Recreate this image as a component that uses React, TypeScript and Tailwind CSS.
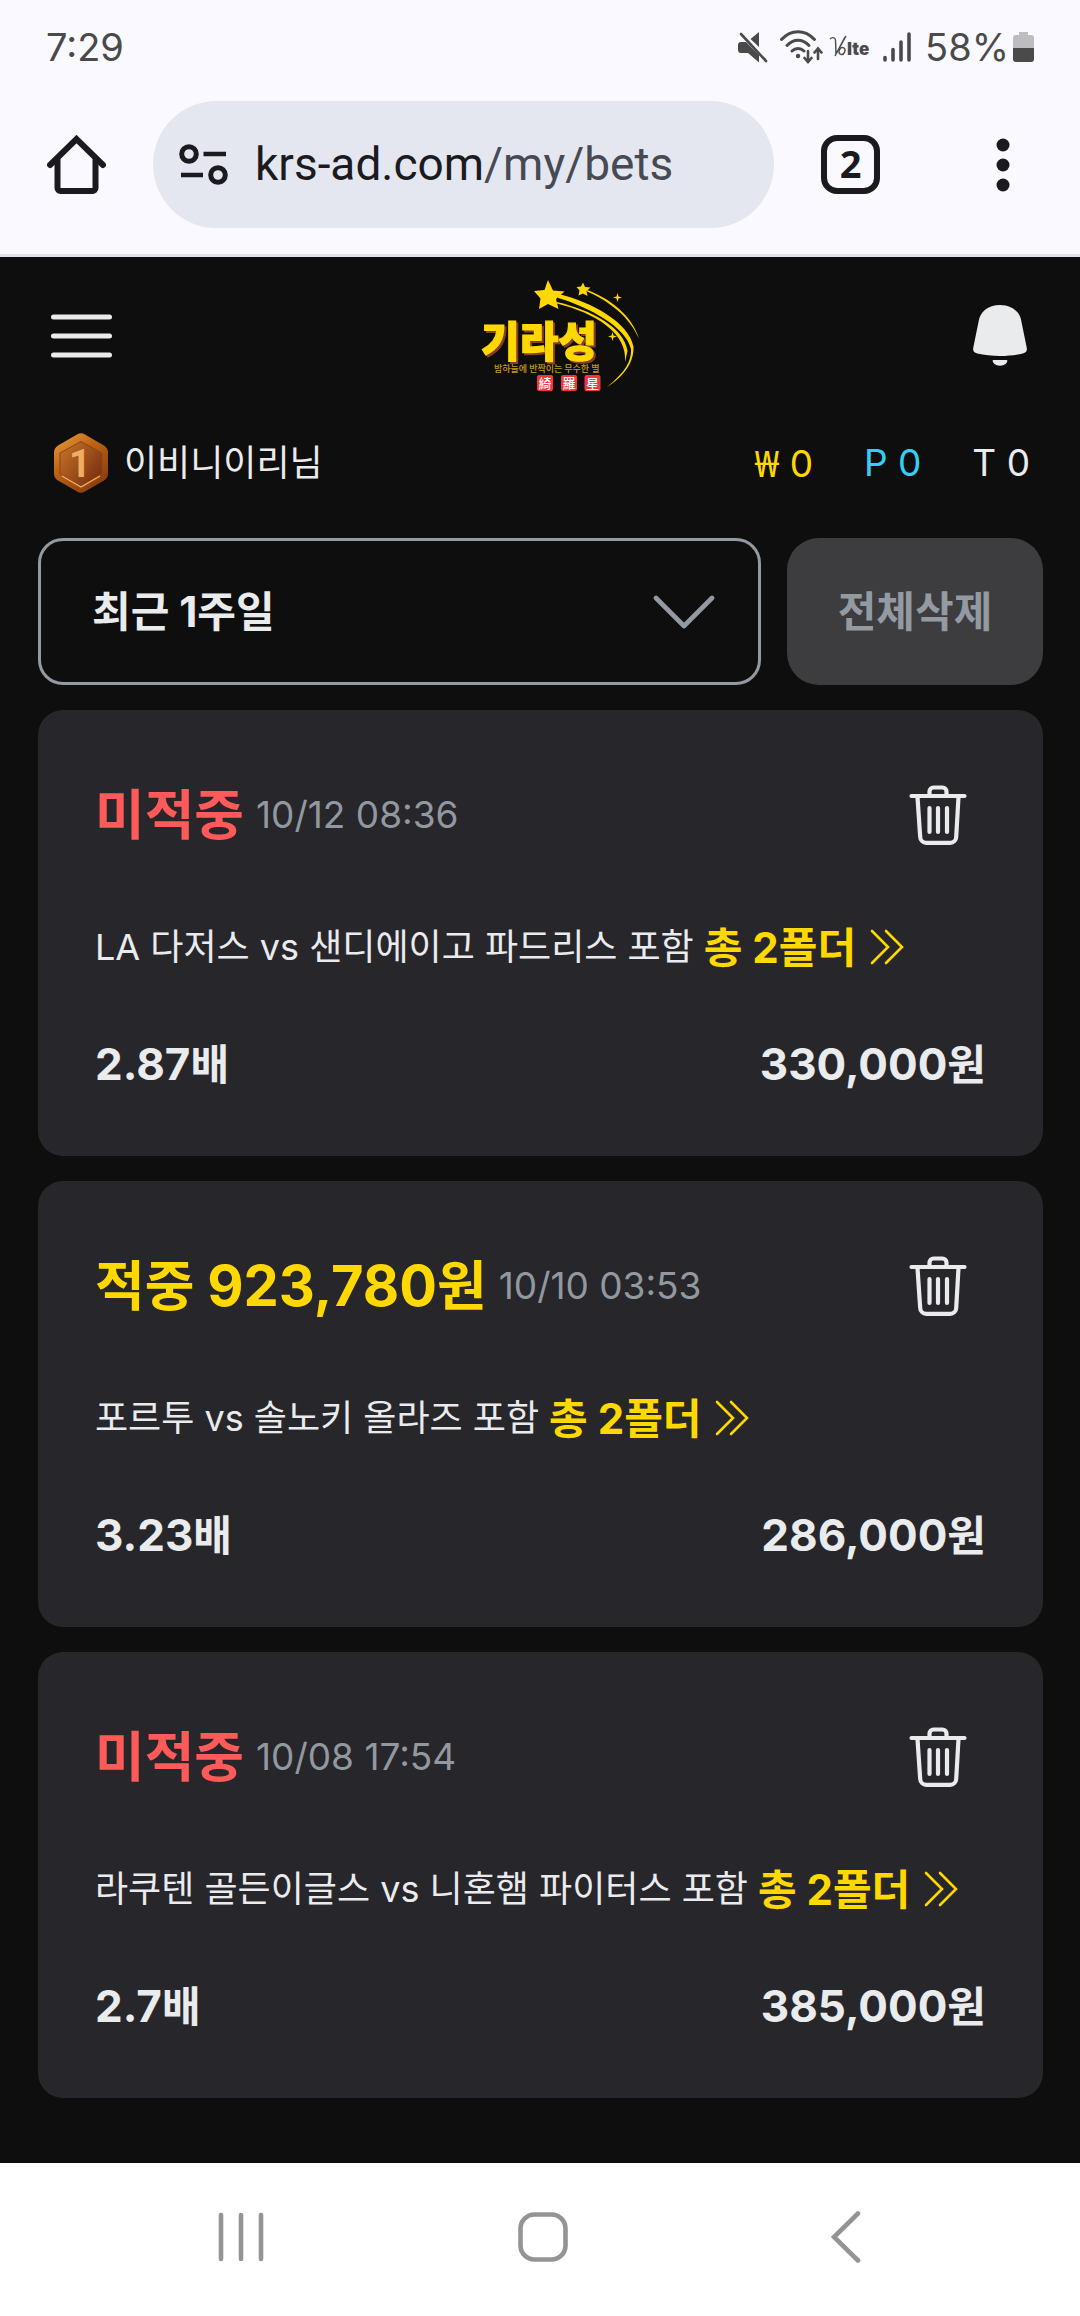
import { useState } from "react";

type Bet = {
  id: number;
  won: boolean;
  prize?: string;
  date: string;
  match: string;
  folders: number;
  odds: string;
  amount: string;
};

const BETS: Bet[] = [
  {
    id: 1,
    won: false,
    date: "10/12 08:36",
    match: "LA 다저스 vs 샌디에이고 파드리스 포함",
    folders: 2,
    odds: "2.87",
    amount: "330,000",
  },
  {
    id: 2,
    won: true,
    prize: "923,780",
    date: "10/10 03:53",
    match: "포르투 vs 솔노키 올라즈 포함",
    folders: 2,
    odds: "3.23",
    amount: "286,000",
  },
  {
    id: 3,
    won: false,
    date: "10/08 17:54",
    match: "라쿠텐 골든이글스 vs 니혼햄 파이터스 포함",
    folders: 2,
    odds: "2.7",
    amount: "385,000",
  },
];

function StatusBar() {
  return (
    <div className="flex h-[94px] items-center justify-between px-[46px] text-[38px] text-[#4a4a4a]">
      <span>7:29</span>
      <div className="flex items-center">
        <svg width="30" height="32" viewBox="0 0 30 32" fill="#4a4a4a" className="mr-3">
          <path d="M21 1v15L12.500 8z" />
          <path d="M3 11h5l13 13v7.500L10 22H3a3 3 0 0 1-3-3v-5a3 3 0 0 1 3-3z" />
          <path d="M3 3l25 27" stroke="#4a4a4a" strokeWidth="2.600" strokeLinecap="round" />
        </svg>
        <svg width="43" height="34" viewBox="0 0 43 34" fill="none" stroke="#4a4a4a" strokeWidth="3" strokeLinecap="round" className="mr-1.5">
          <path d="M1.500 9.500C11-1 25-1 34.500 9.500" />
          <path d="M7 15.500c6.500-7 15.500-7 22 0" />
          <path d="M12 21c3.500-3.500 8.500-3.500 12 0" />
          <circle cx="18" cy="26" r="2.200" fill="#4a4a4a" stroke="none" />
          <path d="M28 21v10M24.500 28l3.500 4 3.500-4M38 29V19M34.500 22.500l3.500-4 3.500 4" strokeWidth="2.600" />
        </svg>
        <svg width="44" height="26" viewBox="0 0 44 26" fill="#4a4a4a" className="mr-2.5">
          <path d="M1 5c2-2 5-2 5.500 1L7 20 16 3M17 2L6 22" fill="none" stroke="#4a4a4a" strokeWidth="1.400" />
          <ellipse cx="13" cy="17" rx="2.800" ry="3.600" transform="rotate(20 13 17)" fill="none" stroke="#4a4a4a" strokeWidth="1.400" />
          <text x="18" y="21" fontFamily="Inter, sans-serif" fontSize="17" fontWeight="900">lte</text>
        </svg>
        <svg width="28" height="30" viewBox="0 0 28 30" stroke="#4a4a4a" strokeWidth="3.600" strokeLinecap="round" className="mr-3.5">
          <path d="M2 25.500v2.500M10 17.500V28M18 10v18M26 2v26" />
        </svg>
        <span className="mr-1">58%</span>
        <svg width="21" height="30" viewBox="0 0 21 30">
          <path d="M6 0h9v3h3a3 3 0 0 1 3 3v10H0V6a3 3 0 0 1 3-3h3z" fill="#bdbdbf" />
          <path d="M0 16h21v11a3 3 0 0 1-3 3H3a3 3 0 0 1-3-3z" fill="#4a4a4a" />
        </svg>
      </div>
    </div>
  );
}

function BrowserBar() {
  return (
    <div className="flex items-center border-b-[3px] border-[#e2e2ea] pt-[7px] pr-[70px] pb-[26px] pl-[47px]">
      <button aria-label="Home">
        <svg width="59" height="59" viewBox="0 0 59 59" fill="none" stroke="#1b1b1f" strokeWidth="6" strokeLinecap="round" strokeLinejoin="round">
          <path d="M3 30L29.500 4 56 30" strokeLinejoin="miter" />
          <path d="M10.500 25v28a3 3 0 0 0 3 3h32a3 3 0 0 0 3-3V25" />
        </svg>
      </button>
      <button className="mx-[47px] flex h-[127px] min-w-0 flex-1 items-center rounded-full bg-[#e4e7f0] pl-[26px] font-['Roboto',sans-serif] text-[46px] text-[#1b1b1f]">
        <svg width="50" height="42" viewBox="0 0 50 42" fill="none" stroke="#1b1b1f" className="mr-[26px] shrink-0">
          <circle cx="10" cy="10" r="7.300" strokeWidth="5" />
          <circle cx="39" cy="31" r="7.300" strokeWidth="5" />
          <path d="M24.500 10H47M2 31h22" strokeWidth="4.400" />
        </svg>
        <span>krs-ad.com</span>
        <span className="text-[#474a53]">/my/bets</span>
      </button>
      <button className="flex size-[59px] items-center justify-center rounded-2xl border-6 border-[#1b1b1f] pb-1 font-['Open_Sans',sans-serif] text-[38px] leading-none font-bold text-[#1b1b1f]">
        2
      </button>
      <button aria-label="Menu" className="ml-[116px]">
        <svg width="14" height="54" viewBox="0 0 14 54" fill="#1b1b1f">
          <circle cx="7" cy="7" r="6.500" />
          <circle cx="7" cy="27" r="6.500" />
          <circle cx="7" cy="47" r="6.500" />
        </svg>
      </button>
    </div>
  );
}

function Logo() {
  return (
    <svg width="204" height="118" viewBox="-20 12 204 118">
      <g fill="#ffd800">
        <path d="M87 15l5 10.500 11.500 1-8.500 7.500 2.500 10-10.500-5-9 5 1.500-10.500L73 26l10.500-1z" />
        <path d="M122 17.500l2 4.500 5.500.500-4 3.500 1 5-4.500-2.500-4.500 2 1-5-3-3.500 4.500-.500z" />
        <path d="M98 29C130 37 168 57 172.500 82 173 100 160 113 145 123 158 112 171 100 170 84 165 62 128 42 97 33z" />
        <path d="M126 25C148 33 171 50 178 74 169 52 148 36 126 26.500z" />
        <path d="M96 37C130 45 163 62 166.500 86L164 97C167 68 134 48 96 38.500z" />
        <path d="M156.500 28l1 3.500 3.500 1-3.500 1-1 3.500-1-3.500-3.500-1 3.500-1zM151.500 67l1 3.500 3.500 1-3.500 1-1 3.500-1-3.500-3.500-1 3.500-1z" />
      </g>
      <text
        x="20"
        y="92"
        fontFamily="'Noto Sans CJK KR', sans-serif"
        fontWeight="900"
        fontSize="42"
        fill="#ffd800"
        stroke="#ffd800"
        strokeWidth="1.200"
        className="drop-shadow-[2px_2px_0_#8c3a2a]"
      >
        기라성
      </text>
      <text x="33" y="107" fontFamily="'Noto Sans CJK KR', sans-serif" fontWeight="500" fontSize="9" fill="#c29a1c">
        밤하늘에 반짝이는 무수한 별
      </text>
      <g fill="#f7333a">
        <rect x="76" y="110" width="16" height="16" rx="2" />
        <rect x="100" y="110" width="16" height="16" rx="2" />
        <rect x="123.500" y="110" width="16" height="16" rx="2" />
      </g>
      <g fontFamily="'Noto Sans CJK TC', sans-serif" fontWeight="500" fontSize="13" fill="#fff">
        <text x="77.500" y="123">綺</text>
        <text x="101.500" y="123">羅</text>
        <text x="125" y="123">星</text>
      </g>
    </svg>
  );
}

function SiteHeader() {
  return (
    <header className="flex h-[157px] items-center justify-between pr-[53px] pl-[51px]">
      <button aria-label="메뉴">
        <svg width="61" height="44" viewBox="0 0 61 44" stroke="#eaebed" strokeWidth="5" strokeLinecap="round">
          <path d="M2.500 3h56M2.500 22h56M2.500 41h56" />
        </svg>
      </button>
      <Logo />
      <button aria-label="알림">
        <svg width="54" height="61" viewBox="0 0 54 61" fill="#eaebed">
          <path d="M27 0C39 0 47.500 7 48.500 17L53.800 43c.4 3-1 4.700-4 5.500-14 3.300-31.600 3.300-45.600 0-3-.8-4.400-2.500-4-5.500L5.500 17C6.500 7 15 0 27 0z" />
          <path d="M20.500 55h13c1.500 0 1 2-.5 3.500-3.500 3-8.500 3-12 0-1.500-1.500-2-3.500-.5-3.500z" />
        </svg>
      </button>
    </header>
  );
}

function LevelBadge() {
  return (
    <svg width="54" height="60" viewBox="0 0 54 60">
      <defs>
        <linearGradient id="rim" x1="0" y1="0" x2="0.700" y2="1">
          <stop offset="0" stopColor="#f0a23c" />
          <stop offset="0.450" stopColor="#bd6317" />
          <stop offset="1" stopColor="#8a3c0c" />
        </linearGradient>
        <linearGradient id="face" x1="0" y1="0" x2="1" y2="0.800">
          <stop offset="0" stopColor="#c8762a" />
          <stop offset="1" stopColor="#7a2f10" />
        </linearGradient>
      </defs>
      <path d="M23 1.500q4-2.500 8 0l19 11q4 2.500 4 7v21q0 4.500-4 7l-19 11q-4 2.500-8 0l-19-11q-4-2.500-4-7v-21q0-4.500 4-7z" fill="url(#rim)" />
      <path d="M27 8.500L48 20v21L27 53 6 41V20z" fill="url(#face)" stroke="#8f4512" strokeWidth="1" />
      <path d="M8 43L27 54 46 43" fill="none" stroke="#f2b160" strokeWidth="1.400" />
      <text x="26" y="44" textAnchor="middle" fontFamily="Roboto, sans-serif" fontWeight="700" fontSize="38" fill="#eeae62">1</text>
    </svg>
  );
}

function TrashIcon() {
  return (
    <svg width="58" height="60" viewBox="0 0 58 60" fill="none" stroke="#eaebed" strokeWidth="4.200" strokeLinecap="round" strokeLinejoin="round">
      <path d="M2.500 11h53" />
      <path d="M20.500 10V6.500a4 4 0 0 1 4-4h9a4 4 0 0 1 4 4V10" />
      <path d="M8.500 12l2.700 40a6 6 0 0 0 6 5.800h24a6 6 0 0 0 6-5.800l2.300-40" />
      <path d="M20.500 23v24M29 23v24M38 23v24" />
    </svg>
  );
}

function BetCard({ bet, onDelete }: { bet: Bet; onDelete: () => void }) {
  return (
    <li className="rounded-[25px] bg-[#27262b] px-[57px] pt-[73px] pb-[60px]">
      <div className="flex h-16 items-center justify-between pr-[19px]">
        <div className="flex items-center">
          {bet.won ? (
            <strong className="text-[54px] font-bold text-[#ffd800]">
              적중 <span className="text-[56px]">{bet.prize}</span>원
            </strong>
          ) : (
            <strong className="text-[54px] font-bold text-[#ff5a5a]">미적중</strong>
          )}
          <span className="ml-3 text-[37px] text-[#92989f]">{bet.date}</span>
        </div>
        <button aria-label="삭제" onClick={onDelete}>
          <TrashIcon />
        </button>
      </div>

      <a href="#" className="mt-[68px] flex h-16 items-center">
        <span className="text-[36px]">{bet.match}</span>
        <span className="ml-2.5 text-[42px] font-bold text-[#ffd800]">
          총 {bet.folders}폴더
        </span>
        <svg width="34" height="36" viewBox="0 0 34 36" fill="none" stroke="#ffd800" strokeWidth="2.600" strokeLinecap="round" className="ml-3.5">
          <path d="M2 2l16 16L2 34M16 2l16 16-16 16" />
        </svg>
      </a>

      <div className="mt-[53px] flex h-16 items-center justify-between text-[42px] font-bold">
        <span>
          <span className="text-[44px]">{bet.odds}</span>배
        </span>
        <span>
          <span className="text-[44px]">{bet.amount}</span>원
        </span>
      </div>
    </li>
  );
}

function NavigationBar() {
  return (
    <nav className="grid h-[153px] grid-cols-3 items-center bg-white pr-[83px] pb-[5px] pl-[90px]">
      <button aria-label="Recents" className="flex justify-center">
        <svg width="48" height="50" viewBox="0 0 48 50" stroke="#949494" strokeWidth="4.600" strokeLinecap="round">
          <path d="M4 3v44M24 3v44M44 3v44" />
        </svg>
      </button>
      <button aria-label="Home" className="flex justify-center">
        <svg width="50" height="50" viewBox="0 0 50 50" fill="none" stroke="#949494" strokeWidth="4.600">
          <rect x="2.500" y="2.500" width="45" height="45" rx="14" />
        </svg>
      </button>
      <button aria-label="Back" className="flex justify-center">
        <svg width="30" height="52" viewBox="0 0 30 52" fill="none" stroke="#949494" strokeWidth="4.600" strokeLinecap="round">
          <path d="M27 2.500L3 26l24 23.500" />
        </svg>
      </button>
    </nav>
  );
}

export default function App() {
  const [bets, setBets] = useState(BETS);
  const [period, setPeriod] = useState("1w");

  return (
    <div className="flex min-h-screen flex-col bg-[#0e0e0e] font-['Inter','Noto_Sans_CJK_KR',sans-serif] text-[#eaebed]">
      <div className="bg-[#faf9ff]">
        <StatusBar />
        <BrowserBar />
      </div>

      <SiteHeader />

      <div className="flex h-[98px] items-center justify-between pr-[50px] pl-[54px]">
        <div className="flex items-center gap-4 text-[36px]">
          <LevelBadge />
          <span>이비니이리님</span>
        </div>
        <div className="flex gap-[51px] text-[37px]">
          <span className="text-[#ffd800]">
            <span className="font-['Noto_Sans',sans-serif]">₩</span> 0
          </span>
          <span className="text-[#33d0f5]">P 0</span>
          <span>T 0</span>
        </div>
      </div>

      <main className="flex-1 pt-[26px] pr-[37px] pb-[65px] pl-[38px]">
        <div className="flex gap-[26px]">
          <div className="relative flex-1">
            <select
              aria-label="기간"
              value={period}
              onChange={(e) => setPeriod(e.target.value)}
              className="h-[147px] w-full appearance-none rounded-[25px] border-3 border-[#939aa2] bg-transparent pl-[51px] text-[42px] font-bold"
            >
              <option value="1w">최근 1주일</option>
              <option value="1m">최근 1개월</option>
            </select>
            <svg
              width="62"
              height="34"
              viewBox="0 0 62 34"
              fill="none"
              stroke="#939aa2"
              strokeWidth="4.600"
              strokeLinecap="round"
              strokeLinejoin="round"
              className="pointer-events-none absolute inset-y-0 right-[46px] my-auto"
            >
              <path d="M3 3l28 28L59 3" />
            </svg>
          </div>
          <button
            onClick={() => setBets([])}
            className="h-[147px] w-64 rounded-[32px] bg-[#3d3d3f] text-[42px] font-bold text-[#939aa2]"
          >
            전체삭제
          </button>
        </div>

        <ul className="mt-[25px] flex flex-col gap-[25px]">
          {bets.map((bet) => (
            <BetCard
              key={bet.id}
              bet={bet}
              onDelete={() => setBets(bets.filter((x) => x.id !== bet.id))}
            />
          ))}
        </ul>
      </main>

      <NavigationBar />
    </div>
  );
}
